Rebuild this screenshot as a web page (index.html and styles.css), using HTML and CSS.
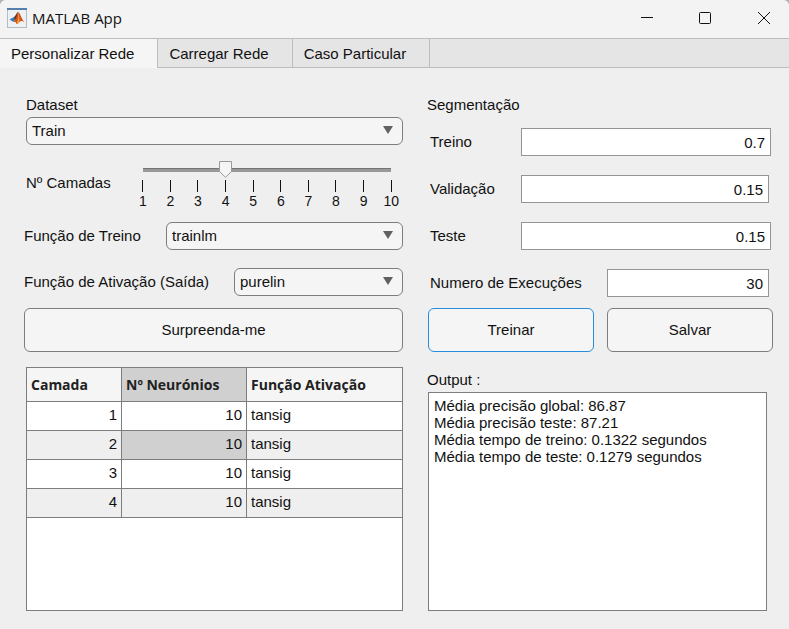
FILE: index.html
```html
<!DOCTYPE html>
<html lang="pt">
<head>
<meta charset="utf-8">
<title>MATLAB App</title>
<link rel="stylesheet" href="styles.css">
</head>
<body>
<div class="window">
  <header class="titlebar">
    <svg class="app-icon" width="20" height="20" viewBox="0 0 20 20" aria-hidden="true">
      <rect x="0.5" y="0.5" width="19" height="19" fill="#eef1f4" stroke="#b3bcc5"/>
      <rect x="0" y="0" width="20" height="2" fill="#5580ad"/>
      <path d="M2.500 11.500L7 9L9 11L6.500 14Z" fill="#3c78b4"/>
      <path d="M7 9C9 8 9.500 4.500 11 4L9.500 11.500L8 12Z" fill="#63342e"/>
      <path d="M11 4C13 4.500 14.500 11 17.500 14.500C15.500 13 14 12.500 12.500 14C11.500 15 10.500 16 9.500 16C9 14 8 13.500 6.500 14C9 11.500 10 7 11 4Z" fill="#d4501c"/>
      <path d="M11 4C12 7 11 12 9.500 16C10.500 16 11.500 15 12.500 14C12.500 10 12 6 11 4Z" fill="#f4a33b"/>
    </svg>
    <h1 class="app-title">MATLAB App</h1>
    <div class="window-controls">
      <button type="button" aria-label="Minimizar"><svg width="12" height="12" viewBox="0 0 12 12"><path d="M0 5.500H12"/></svg></button>
      <button type="button" aria-label="Maximizar"><svg width="12" height="12" viewBox="0 0 12 12"><rect x="0.500" y="0.500" width="11" height="11" rx="1"/></svg></button>
      <button type="button" aria-label="Fechar"><svg width="12" height="12" viewBox="0 0 12 12"><path d="M0 0L12 12M12 0L0 12"/></svg></button>
    </div>
  </header>

  <nav class="tabs" role="tablist">
    <button class="tab tab-active" type="button" role="tab" aria-selected="true">Personalizar Rede</button>
    <button class="tab" type="button" role="tab" aria-selected="false">Carregar Rede</button>
    <button class="tab" type="button" role="tab" aria-selected="false">Caso Particular</button>
  </nav>

  <main class="panel">
    <section class="column">
      <div class="stack inset">
        <label for="dataset">Dataset</label>
        <select id="dataset"><option>Train</option></select>
      </div>
      <div class="slider-row inset">
        <label for="layers">Nº Camadas</label>
        <div class="slider">
          <input id="layers" type="range" min="1" max="10" value="4">
          <div class="scale" aria-hidden="true">
            <span>1</span><span>2</span><span>3</span><span>4</span><span>5</span><span>6</span><span>7</span><span>8</span><span>9</span><span>10</span>
          </div>
        </div>
      </div>
      <div class="field field-train">
        <label for="train-fn">Função de Treino</label>
        <select id="train-fn"><option>trainlm</option></select>
      </div>
      <div class="field field-output">
        <label for="output-fn">Função de Ativação (Saída)</label>
        <select id="output-fn"><option>purelin</option></select>
      </div>
      <div class="actions"><button class="action" type="button">Surpreenda-me</button></div>
      <div class="table-box">
        <table>
          <colgroup><col class="col-layer"><col class="col-neurons"><col></colgroup>
          <thead>
            <tr><th scope="col">Camada</th><th class="selected" scope="col">Nº Neurónios</th><th scope="col">Função Ativação</th></tr>
          </thead>
          <tbody>
            <tr><td class="num">1</td><td class="num">10</td><td>tansig</td></tr>
            <tr><td class="num">2</td><td class="num selected">10</td><td>tansig</td></tr>
            <tr><td class="num">3</td><td class="num">10</td><td>tansig</td></tr>
            <tr><td class="num">4</td><td class="num">10</td><td>tansig</td></tr>
          </tbody>
        </table>
      </div>
    </section>

    <section class="column">
      <h2 class="heading">Segmentação</h2>
      <div class="segments">
        <div class="field field-segment">
          <label for="seg-train">Treino</label>
          <input id="seg-train" type="text" inputmode="decimal" value="0.7">
        </div>
        <div class="field field-segment field-short">
          <label for="seg-validation">Validação</label>
          <input id="seg-validation" type="text" inputmode="decimal" value="0.15">
        </div>
        <div class="field field-segment">
          <label for="seg-test">Teste</label>
          <input id="seg-test" type="text" inputmode="decimal" value="0.15">
        </div>
        <div class="field field-runs field-short">
          <label for="runs">Numero de Execuções</label>
          <input id="runs" type="text" inputmode="numeric" value="30">
        </div>
      </div>
      <div class="actions actions-pair">
        <button class="action action-focus" type="button">Treinar</button>
        <button class="action" type="button">Salvar</button>
      </div>
      <label class="output-label" for="output">Output :</label>
      <textarea id="output" readonly>Média precisão global: 86.87
Média precisão teste: 87.21
Média tempo de treino: 0.1322 segundos
Média tempo de teste: 0.1279 segundos</textarea>
    </section>
  </main>
</div>
</body>
</html>
```
FILE: styles.css
```css
* {
  box-sizing: border-box;
}

html {
  background: #b4b4b4;
}

body {
  margin: 0;
  color: #111;
  font: 15px/18px "Liberation Sans", Arial, sans-serif;
}

button,
input,
select,
textarea {
  margin: 0;
  color: inherit;
  font: inherit;
}

.window {
  display: flex;
  flex-direction: column;
  min-height: 100vh;
  overflow: hidden;
  border-radius: 6px 6px 0 0;
  background: #efefef;
}

/* Title bar */
.titlebar {
  display: flex;
  align-items: center;
  height: 39px;
  padding: 0 0 2px 7px;
  border-bottom: 1px solid #bdbdbd;
  background: #f3f3f3;
}

.app-title {
  margin: 0 auto 0 5px;
  font: 15px/20px "Open Sans", "Segoe UI", sans-serif;
}

.window-controls {
  display: flex;
}

.window-controls button {
  display: grid;
  place-items: center;
  width: 58px;
  height: 36px;
  padding: 0;
  border: 0;
  background: none;
}

.window-controls button:last-child {
  width: 55px;
  padding: 0 0 0 5px;
}

.window-controls svg {
  fill: none;
  stroke: #111;
}

/* Tabs */
.tabs {
  display: flex;
  height: 29px;
  background: #e5e5e5;
  box-shadow: inset 0 -1px #bdbdbd;
}

.tab {
  height: 29px;
  padding: 0 23px 0 11px;
  border: 0;
  border-right: 1px solid #bdbdbd;
  background: none;
}

.tab-active {
  background: #f5f5f5;
}

/* Panel */
.panel {
  display: grid;
  flex: 1;
  grid-template-columns: 379fr 346fr;
  gap: 24px;
  padding: 28px 16px 18px 24px;
}

.column {
  display: flex;
  flex-direction: column;
  min-width: 0;
}

.inset {
  margin-left: 2px;
}

.stack {
  display: grid;
  gap: 3px;
}

.field {
  display: grid;
  align-items: center;
}

select {
  width: 100%;
  height: 28px;
  padding: 0 24px 0 5px;
  appearance: none;
  border: 1px solid #7d7d7d;
  border-radius: 6px;
  background: #f5f5f5 url("data:image/svg+xml,%3Csvg xmlns='http://www.w3.org/2000/svg' width='10' height='8'%3E%3Cpath d='M0 0H10L5 8Z' fill='%23616161'/%3E%3C/svg%3E") no-repeat right 9px top 8px;
}

.field-train {
  grid-template-columns: 142px 1fr;
  margin-bottom: 18px;
}

.field-output {
  grid-template-columns: 210px 1fr;
  margin-bottom: 12px;
}

/* Slider */
.slider-row {
  display: grid;
  grid-template-columns: 111px 1fr;
  align-items: center;
  height: 77px;
  padding-bottom: 2px;
}

.slider {
  padding: 4px 6px 0 0;
}

.slider input {
  display: block;
  width: 100%;
  height: 18px;
  appearance: none;
  background: none;
}

.slider input::-webkit-slider-runnable-track {
  height: 18px;
  background: linear-gradient(#747474 1px, #999 1px) no-repeat 6px 8px / calc(100% - 12px) 4px;
}

.slider input::-webkit-slider-thumb {
  width: 13px;
  height: 17px;
  margin-top: 1px;
  appearance: none;
  background: url("data:image/svg+xml,%3Csvg xmlns='http://www.w3.org/2000/svg' width='13' height='17'%3E%3Cpath d='M.5 .5H12.500V10.500L6.500 16.300L.5 10.500Z' fill='%23f5f5f5' stroke='%23999'/%3E%3C/svg%3E") no-repeat;
}

.scale {
  display: grid;
  grid-template-columns: repeat(10, 1fr);
  margin: 2px -8px 0;
  font-size: 14px;
  line-height: 16px;
  text-align: center;
}

.scale span::before {
  content: "";
  display: block;
  width: 1px;
  height: 12px;
  margin: 0 auto 1px;
  background: #111;
}

/* Buttons */
.actions {
  display: flex;
}

.actions-pair {
  gap: 13px;
  margin-left: 1px;
}

.action {
  flex: 1;
  height: 44px;
  border: 1px solid #7d7d7d;
  border-radius: 6px;
  background: #f5f5f5;
}

.action-focus {
  border-color: #268cdd;
}

/* Table */
.table-box {
  flex: 1;
  margin: 15px 0 0 2px;
  border: 1px solid #7d7d7d;
  background: #fff;
}

table {
  width: 100%;
  border-collapse: separate;
  border-spacing: 0;
  table-layout: fixed;
}

.col-layer {
  width: 95px;
}

.col-neurons {
  width: 125px;
}

th,
td {
  height: 29px;
  padding: 0 4px 2px;
  border-bottom: 1px solid #7d7d7d;
  text-align: left;
}

th:not(:last-child),
td:not(:last-child) {
  border-right: 1px solid #7d7d7d;
}

th {
  height: 34px;
  padding-bottom: 0;
  background: #f5f5f5;
  color: #212121;
  font: bold 14px/20px "Open Sans", "Segoe UI", sans-serif;
}

tbody tr:nth-child(even) {
  background: #efefef;
}

.num {
  text-align: right;
}

.selected {
  background: #d0d0d0;
}

/* Segmentation fields */
.heading {
  margin: 0;
  font: inherit;
}

.segments {
  display: grid;
  gap: 19px;
  margin: 14px 0 11px 3px;
}

.field-segment {
  grid-template-columns: 91px 1fr;
  padding-right: 2px;
}

.field-runs {
  grid-template-columns: 177px 1fr;
}

.field-short {
  padding-right: 4px;
}

.field input {
  width: 100%;
  height: 28px;
  padding: 0 5px;
  border: 1px solid #949494;
  background: #fff;
  text-align: right;
}

/* Output */
.output-label {
  margin-top: 19px;
}

textarea {
  flex: 1;
  margin: 3px 6px 0 1px;
  padding: 4px 5px;
  resize: none;
  border: 1px solid #7d7d7d;
  background: #fff;
  line-height: 17px;
}
```
